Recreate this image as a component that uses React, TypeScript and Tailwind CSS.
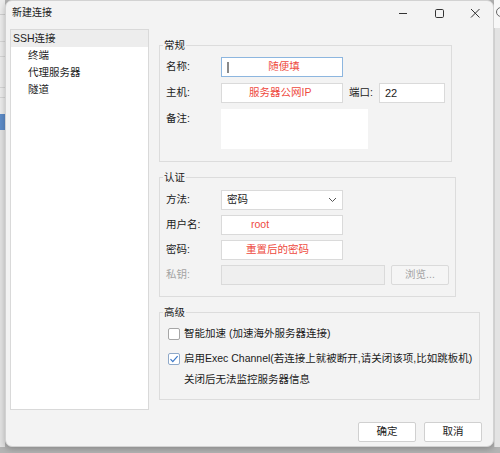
import React from 'react';

const font = "font-['Liberation_Sans','Noto_Sans_CJK_SC',sans-serif]";

function Field({ className = '', children }: { className?: string; children?: React.ReactNode }) {
  return (
    <div className={`h-[20px] border border-[#dadada] bg-white flex items-center ${className}`}>{children}</div>
  );
}

function Label({ children, muted }: { children: React.ReactNode; muted?: boolean }) {
  return <div className={`w-[55px] shrink-0 ${muted ? 'text-[#a3a3a3]' : 'text-[#1b1b1b]'}`}>{children}</div>;
}

function Group({ title, className = '', inner = '', children }: { title: string; className?: string; inner?: string; children: React.ReactNode }) {
  return (
    <fieldset className={`border border-[#dcdcdc] ${className}`}>
      <legend className="ml-[3px] px-[1px] leading-[16px] text-[#1b1b1b]">{title}</legend>
      <div className={inner}>{children}</div>
    </fieldset>
  );
}

export default function App() {
  return (
    <div className={`w-[500px] h-[453px] bg-[#b4b4b4] overflow-hidden flex ${font} text-[10.5px]`}>
      {/* desktop strip left */}
      <div className="w-[5px] h-[447px] bg-[#ececec] flex flex-col">
        <div className="h-[15px] border-b border-[#cfcfcf]" />
        <div className="h-[27px] border-b border-[#d6d6d6]" />
        <div className="h-[15px] border-b border-[#d6d6d6]" />
        <div className="h-[31px] border-b border-[#d6d6d6]" />
        <div className="h-[10px] border-b border-[#d6d6d6]" />
        <div className="h-[16px]" />
        <div className="h-[16px] bg-[#5e8cc8]" />
        <div className="flex-1 bg-[#e2e2e2]" />
      </div>

      {/* dialog window */}
      <div className="w-[489px] h-[447px] bg-[#f3f3f3] rounded-[7px] border border-[#d2d2d2] flex flex-col shadow-[0_2px_6px_rgba(0,0,0,0.25)]">
        {/* title bar */}
        <div className="h-[28px] flex justify-between">
          <div className="pl-[6px] pt-[4px] leading-[16px] text-[10px] text-[#1b1b1b]">新建连接</div>
          <div className="flex h-[24px]">
            <div className="w-[36px] flex items-center justify-center">
              <svg width="10" height="10" viewBox="0 0 10 10">
                <path d="M1 5.5h8" stroke="#333" strokeWidth="1" />
              </svg>
            </div>
            <div className="w-[36px] flex items-center justify-center">
              <svg width="10" height="10" viewBox="0 0 10 10">
                <rect x="1.5" y="1.5" width="8" height="8" rx="1.2" fill="none" stroke="#333" strokeWidth="1" />
              </svg>
            </div>
            <div className="w-[36px] flex items-center justify-center">
              <svg width="10" height="10" viewBox="0 0 10 10">
                <path d="M1 1l8.5 8.5M9.5 1L1 9.5" stroke="#333" strokeWidth="1" />
              </svg>
            </div>
          </div>
        </div>

        <div className="h-[381px] flex">
          {/* tree */}
          <div className="ml-[4px] w-[139px] h-full bg-white border border-[#d9d9d9] text-[#1e1e1e]">
            <div className="h-[17px] leading-[17px] pl-[2px] bg-[#ededed]">SSH连接</div>
            <div className="h-[17px] leading-[17px] pl-[17px]">终端</div>
            <div className="h-[17px] leading-[17px] pl-[17px]">代理服务器</div>
            <div className="h-[17px] leading-[17px] pl-[17px]">隧道</div>
          </div>

          {/* settings */}
          <div className="ml-[10px] pt-[8px] flex flex-col">
            <Group title="常规" className="w-[293px]" inner="pl-[6px] pb-[12px]">
              <div className="mt-[4px] flex items-center">
                <Label>名称:</Label>
                <Field className="w-[122px] !border-[#8db6df] relative justify-center">
                  <span className="absolute left-[5px] top-[4px] w-[2px] h-[11px] bg-[#8a8a8a]" />
                  <span className="text-[#ee4a3e] pl-[4px]">随便填</span>
                </Field>
              </div>
              <div className="mt-[6px] flex items-center">
                <Label>主机:</Label>
                <Field className="w-[122px] pl-[27px]">
                  <span className="text-[#ee4a3e]">服务器公网IP</span>
                </Field>
                <div className="ml-[6px] w-[30px] text-[#1b1b1b]">端口:</div>
                <Field className="w-[66px] pl-[5px]">
                  <span className="text-[#1b1b1b] text-[11px]">22</span>
                </Field>
              </div>
              <div className="mt-[6px] flex items-start">
                <div className="pt-[2px]"><Label>备注:</Label></div>
                <div className="w-[147px] h-[40px] bg-white" />
              </div>
            </Group>

            <Group title="认证" className="mt-[7px] w-[297px]" inner="pl-[6px] pb-[11px]">
              <div className="mt-[5px] flex items-center">
                <Label>方法:</Label>
                <Field className="w-[122px] pl-[5px] pr-[5px] justify-between">
                  <span className="text-[#1b1b1b]">密码</span>
                  <svg width="9" height="6" viewBox="0 0 9 6">
                    <path d="M1 1l3.5 3.5L8 1" fill="none" stroke="#555" strokeWidth="1" />
                  </svg>
                </Field>
              </div>
              <div className="mt-[5px] flex items-center">
                <Label>用户名:</Label>
                <Field className="w-[122px] pl-[29px]">
                  <span className="text-[#ee4a3e]">root</span>
                </Field>
              </div>
              <div className="mt-[5px] flex items-center">
                <Label>密码:</Label>
                <Field className="w-[122px] pl-[24px]">
                  <span className="text-[#ee4a3e]">重置后的密码</span>
                </Field>
              </div>
              <div className="mt-[5px] flex items-center">
                <Label muted>私钥:</Label>
                <Field className="w-[164px] !bg-[#efefef]" />
                <div className="ml-[6px] w-[58px] h-[20px] border border-[#dadada] bg-[#f5f5f5] rounded-[2px] flex items-center justify-center text-[#a3a3a3]">
                  浏览...
                </div>
              </div>
            </Group>

            <Group title="高级" className="mt-[7px] w-[321px] text-[#1b1b1b]" inner="pl-[8px] pb-[9px]">
              <div className="mt-[4px] h-[20px] flex items-center">
                <div className="w-[12px] h-[12px] border border-[#a6a6a6] bg-white rounded-[2px]" />
                <span className="ml-[4px]">智能加速 (加速海外服务器连接)</span>
              </div>
              <div className="mt-[5px] h-[20px] flex items-center">
                <div className="w-[12px] h-[12px] border border-[#8fa9c9] bg-white rounded-[2px] flex items-center justify-center">
                  <svg width="10" height="10" viewBox="0 0 10 10">
                    <path d="M1.5 5.2l2.3 2.4L8.6 2.2" fill="none" stroke="#3b78c8" strokeWidth="1.2" />
                  </svg>
                </div>
                <span className="ml-[4px]">启用Exec Channel(若连接上就被断开,请关闭该项,比如跳板机)</span>
              </div>
              <div className="mt-[1px] h-[20px] flex items-center pl-[16px]">关闭后无法监控服务器信息</div>
            </Group>
          </div>
        </div>

        {/* buttons */}
        <div className="mt-[12px] flex justify-end gap-[8px] pr-[11px]">
          <div className="w-[58px] h-[20px] border border-[#d0d0d0] bg-white rounded-[2px] flex items-center justify-center text-[#1b1b1b]">确定</div>
          <div className="w-[58px] h-[20px] border border-[#d0d0d0] bg-white rounded-[2px] flex items-center justify-center text-[#1b1b1b]">取消</div>
        </div>
      </div>

      {/* desktop strip right */}
      <div className="w-[6px] h-[447px] flex flex-col">
        <div className="h-[28px] bg-[#f7f7f7] relative overflow-hidden">
          <div className="absolute left-[2px] top-[7px] w-[10px] h-[10px] rounded-full border-[1.5px] border-[#666]" />
        </div>
        <div className="flex-1 bg-[#e3e3e3] border-l border-[#cfcfcf]" />
      </div>
    </div>
  );
}
